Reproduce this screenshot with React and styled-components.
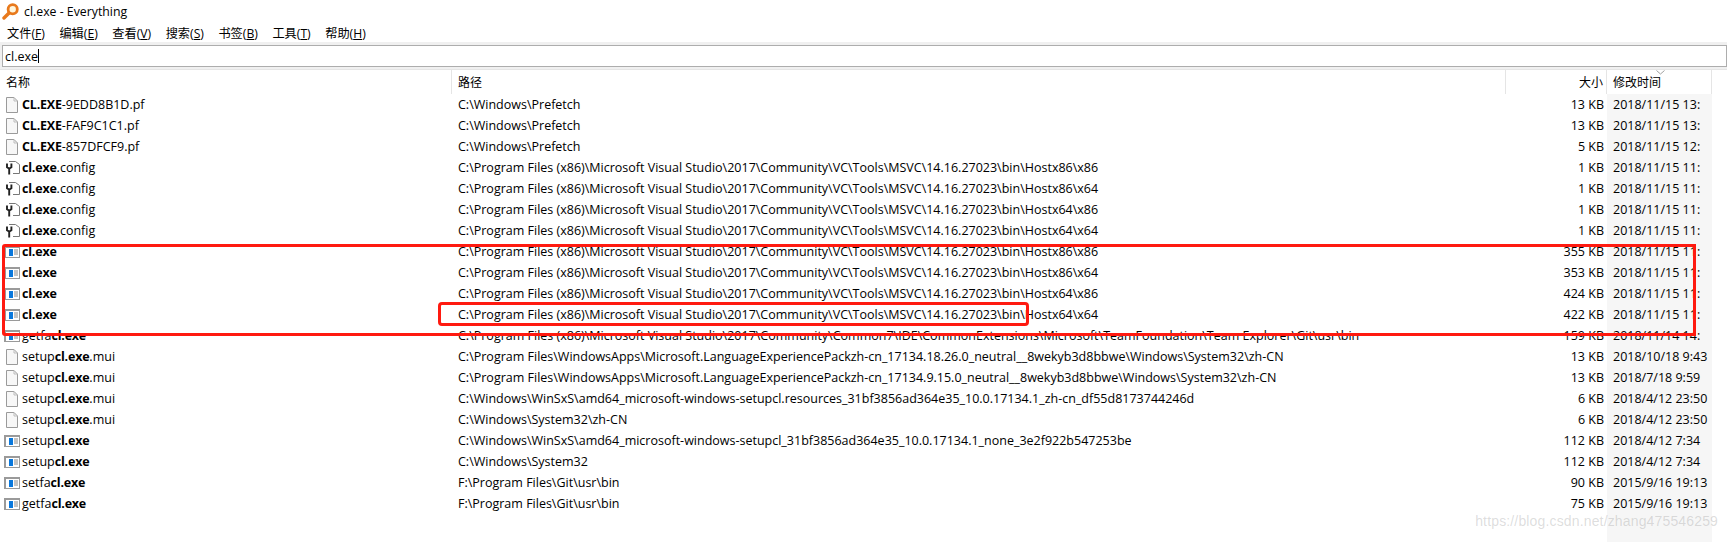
import React from "react";
import styled, { createGlobalStyle } from "styled-components";

const Global = createGlobalStyle`
  html, body { margin: 0; padding: 0; background: #fff; overflow: hidden; }
  * { box-sizing: border-box; }
`;
const Page = styled.div`
  position: relative;
  width: 1727px;
  height: 542px;
  overflow: hidden;
  background: #fff;
  color: #000;
  font-family: "Open Sans", "Noto Sans CJK SC", sans-serif;
  font-size: 12.5px;
`;
const TitleBar = styled.div`
  height: 23px;
  display: flex;
  align-items: center;
  gap: 5px;
  padding-left: 2px;
  font-size: 12.3px;
`;
const MenuBar = styled.div`
  height: 19px;
  display: flex;
  align-items: center;
  gap: 14.5px;
  padding-left: 7px;
  font-size: 12.2px;
  span u { text-underline-offset: 1px; }
`;
const SearchWrap = styled.div`
  background: #f0f0f0;
  height: 27px;
  padding: 3px 0 2px 2px;
`;
const SearchBox = styled.div`
  height: 22px;
  background: #fff;
  border: 1px solid #adadad;
  padding-left: 2px;
  display: flex;
  align-items: center;
`;
const Caret = styled.i`
  width: 1px;
  height: 14px;
  background: #000;
`;
const Cols = "452px 1054px 101px 105px 15px";
const Header = styled.div`
  display: grid;
  grid-template-columns: ${Cols};
  height: 25px;
  border-top: 1px solid #e5e5e5;
`;
const HeadCell = styled.div`
  position: relative;
  display: flex;
  align-items: center;
  justify-content: ${(p) => (p.$right ? "flex-end" : "flex-start")};
  padding: ${(p) => (p.$right ? "0 3px 0 0" : "0 0 0 6px")};
  border-right: 1px solid #e5e5e5;
  font-size: 12px;
`;
const SortMark = styled.svg`
  position: absolute;
  left: 49px;
  top: 0;
`;
const Body = styled.div`
  position: relative;
`;
const DateStripe = styled.div`
  position: absolute;
  left: 1607px;
  top: 0;
  width: 105px;
  height: 448px;
  background: #f6f6f6;
`;
const Row = styled.div`
  position: relative;
  display: grid;
  grid-template-columns: ${Cols};
  height: 21px;
  align-items: center;
  white-space: nowrap;
`;
const NameCell = styled.div`
  display: flex;
  align-items: center;
  padding-left: ${(p) => (p.$wide ? "4px" : "6px")};
  gap: ${(p) => (p.$wide ? "2px" : "4px")};
  b { font-weight: 700; letter-spacing: -0.2px; }
`;
const PathCell = styled.div`
  padding-left: 6px;
`;
const SizeCell = styled.div`
  text-align: right;
  padding-right: 3px;
`;
const DateCell = styled.div`
  padding-left: 6px;
  overflow: hidden;
`;
const BigBox = styled.div`
  position: absolute;
  left: 2px;
  top: 244px;
  width: 1694px;
  height: 92px;
  border: 3px solid #ff1a10;
  border-radius: 3px 0 0 3px;
`;
const SmallBox = styled.div`
  position: absolute;
  left: 438px;
  top: 302px;
  width: 591px;
  height: 24px;
  border: 3px solid #ff1a10;
  border-radius: 4px;
`;
const Watermark = styled.div`
  position: absolute;
  right: 9px;
  top: 513px;
  font-family: "Liberation Sans", sans-serif;
  font-size: 14px;
  color: rgba(150, 150, 150, 0.32);
  letter-spacing: 0.15px;
`;

const Logo = () => (
  <svg width="17" height="17" viewBox="0 0 17 17">
    <circle cx="10.7" cy="6.3" r="4.6" fill="#fff6dc" stroke="#e8791c" strokeWidth="2.8" />
    <path d="M6.8 10.2 L2 15" stroke="#e8791c" strokeWidth="3.4" strokeLinecap="round" />
  </svg>
);
const DocIcon = () => (
  <svg width="12" height="16" viewBox="0 0 12 16" style={{ flex: "none" }}>
    <path d="M.5.5H8L11.5 4V15.5H.5Z" fill="#f7f7f7" stroke="#9a9a9a" />
    <path d="M8 .5V4H11.5" fill="none" stroke="#bdbdbd" />
  </svg>
);
const CfgIcon = () => (
  <svg width="14" height="14" viewBox="0 0 14 14" style={{ flex: "none", marginRight: -2 }}>
    <path d="M3 .5H9.5L13.5 3.5V12.5H7" fill="#fff" stroke="#777" />
    <path d="M1 2.5V6.2L3.2 7.6L5.4 6.2V2.5M3.2 7V13.5" fill="none" stroke="#222" strokeWidth="1.9" />
  </svg>
);
const ExeIcon = () => (
  <svg width="16" height="12" viewBox="0 0 16 12" style={{ flex: "none" }}>
    <rect x="0" y="0" width="16" height="12" fill="#9a9a9a" />
    <rect x="2" y="2" width="13" height="9" fill="#fff" />
    <rect x="5" y="3" width="4" height="7" fill="#0a78dc" />
    <path d="M10 4H14M10 6H14M10 8H14" stroke="#8a8a8a" />
  </svg>
);

const ICONS = { doc: DocIcon, cfg: CfgIcon, exe: ExeIcon };
const P = "C:\\Program Files (x86)\\Microsoft Visual Studio\\2017\\Community\\VC\\Tools\\MSVC\\14.16.27023\\bin\\";
const rows = [
  ["doc", "", "CL.EXE", "-9EDD8B1D.pf", "C:\\Windows\\Prefetch", "13 KB", "2018/11/15 13:"],
  ["doc", "", "CL.EXE", "-FAF9C1C1.pf", "C:\\Windows\\Prefetch", "13 KB", "2018/11/15 13:"],
  ["doc", "", "CL.EXE", "-857DFCF9.pf", "C:\\Windows\\Prefetch", "5 KB", "2018/11/15 12:"],
  ["cfg", "", "cl.exe", ".config", P + "Hostx86\\x86", "1 KB", "2018/11/15 11:"],
  ["cfg", "", "cl.exe", ".config", P + "Hostx86\\x64", "1 KB", "2018/11/15 11:"],
  ["cfg", "", "cl.exe", ".config", P + "Hostx64\\x86", "1 KB", "2018/11/15 11:"],
  ["cfg", "", "cl.exe", ".config", P + "Hostx64\\x64", "1 KB", "2018/11/15 11:"],
  ["exe", "", "cl.exe", "", P + "Hostx86\\x86", "355 KB", "2018/11/15 11:"],
  ["exe", "", "cl.exe", "", P + "Hostx86\\x64", "353 KB", "2018/11/15 11:"],
  ["exe", "", "cl.exe", "", P + "Hostx64\\x86", "424 KB", "2018/11/15 11:"],
  ["exe", "", "cl.exe", "", P + "Hostx64\\x64", "422 KB", "2018/11/15 11:"],
  ["exe", "getfa", "cl.exe", "", "C:\\Program Files (x86)\\Microsoft Visual Studio\\2017\\Community\\Common7\\IDE\\CommonExtensions\\Microsoft\\TeamFoundation\\Team Explorer\\Git\\usr\\bin", "159 KB", "2018/11/14 14:"],
  ["doc", "setup", "cl.exe", ".mui", "C:\\Program Files\\WindowsApps\\Microsoft.LanguageExperiencePackzh-cn_17134.18.26.0_neutral__8wekyb3d8bbwe\\Windows\\System32\\zh-CN", "13 KB", "2018/10/18 9:43"],
  ["doc", "setup", "cl.exe", ".mui", "C:\\Program Files\\WindowsApps\\Microsoft.LanguageExperiencePackzh-cn_17134.9.15.0_neutral__8wekyb3d8bbwe\\Windows\\System32\\zh-CN", "13 KB", "2018/7/18 9:59"],
  ["doc", "setup", "cl.exe", ".mui", "C:\\Windows\\WinSxS\\amd64_microsoft-windows-setupcl.resources_31bf3856ad364e35_10.0.17134.1_zh-cn_df55d8173744246d", "6 KB", "2018/4/12 23:50"],
  ["doc", "setup", "cl.exe", ".mui", "C:\\Windows\\System32\\zh-CN", "6 KB", "2018/4/12 23:50"],
  ["exe", "setup", "cl.exe", "", "C:\\Windows\\WinSxS\\amd64_microsoft-windows-setupcl_31bf3856ad364e35_10.0.17134.1_none_3e2f922b547253be", "112 KB", "2018/4/12 7:34"],
  ["exe", "setup", "cl.exe", "", "C:\\Windows\\System32", "112 KB", "2018/4/12 7:34"],
  ["exe", "setfa", "cl.exe", "", "F:\\Program Files\\Git\\usr\\bin", "90 KB", "2015/9/16 19:13"],
  ["exe", "getfa", "cl.exe", "", "F:\\Program Files\\Git\\usr\\bin", "75 KB", "2015/9/16 19:13"],
];
const menus = [["文件", "F"], ["编辑", "E"], ["查看", "V"], ["搜索", "S"], ["书签", "B"], ["工具", "T"], ["帮助", "H"]];

export default function App() {
  return (
    <Page>
      <Global />
      <TitleBar>
        <Logo />
        <span>cl.exe - Everything</span>
      </TitleBar>
      <MenuBar>
        {menus.map(([t, k]) => (
          <span key={k}>{t}(<u>{k}</u>)</span>
        ))}
      </MenuBar>
      <SearchWrap>
        <SearchBox>cl.exe<Caret /></SearchBox>
      </SearchWrap>
      <Header>
        <HeadCell>名称</HeadCell>
        <HeadCell>路径</HeadCell>
        <HeadCell $right>大小</HeadCell>
        <HeadCell>
          修改时间
          <SortMark width="9" height="5" viewBox="0 0 9 5">
            <path d="M.5.5L4.5 4L8.5.5" fill="none" stroke="#a0a0a0" />
          </SortMark>
        </HeadCell>
      </Header>
      <Body>
        <DateStripe />
        {rows.map(([icon, pre, bold, post, path, size, date], i) => {
          const Icon = ICONS[icon];
          return (
            <Row key={i}>
              <NameCell $wide={icon === "exe"}>
                <Icon />
                <span>{pre}<b>{bold}</b>{post}</span>
              </NameCell>
              <PathCell>{path}</PathCell>
              <SizeCell>{size}</SizeCell>
              <DateCell>{date}</DateCell>
            </Row>
          );
        })}
      </Body>
      <BigBox />
      <SmallBox />
      <Watermark>https://blog.csdn.net/zhang475546259</Watermark>
    </Page>
  );
}
